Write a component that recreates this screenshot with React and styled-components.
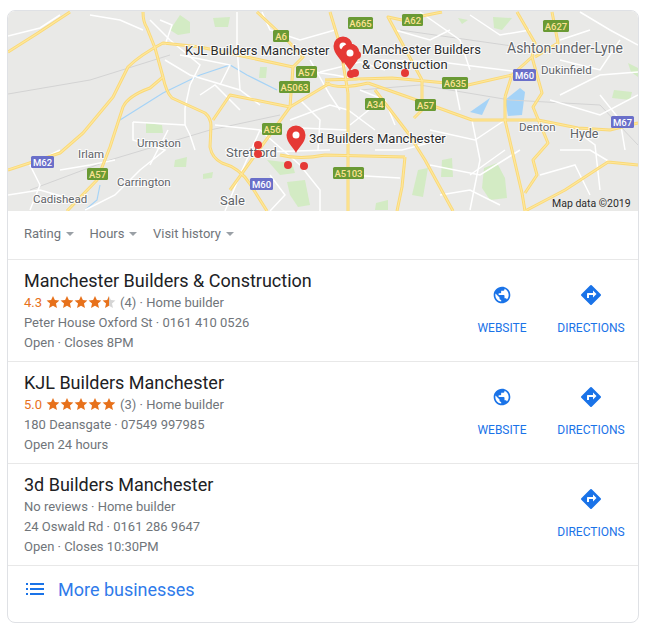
import React from 'react';
import styled, { createGlobalStyle } from 'styled-components';

const GlobalStyle = createGlobalStyle`
  body {
    margin: 0;
    background: #fff;
    font-family: "Roboto", "Liberation Sans", Arial, sans-serif;
  }
`;

const places = [
  {
    name: 'Manchester Builders & Construction',
    rating: '4.3',
    stars: 4.5,
    reviews: '(4)',
    address: 'Peter House Oxford St · 0161 410 0526',
    hours: 'Open · Closes 8PM',
    website: true,
  },
  {
    name: 'KJL Builders Manchester',
    rating: '5.0',
    stars: 5,
    reviews: '(3)',
    address: '180 Deansgate · 07549 997985',
    hours: 'Open 24 hours',
    website: true,
  },
  {
    name: '3d Builders Manchester',
    address: '24 Oswald Rd · 0161 286 9647',
    hours: 'Open · Closes 10:30PM',
    website: false,
  },
];

// main roads, in page coordinates
const yellowRoads = [
  'M8 52L38 33L70 12',
  'M143 12Q143 22 147 28L155 48L163 77Q166 92 172 98L205 113Q211 118 211 126L210 147Q212 158 222 163Q240 168 250 184L267 211',
  'M8 170L60 153L83 133L113 97L128 67Q140 55 163 43L200 47L293 67',
  'M67 211L97 180L110 147L123 107Q128 96 150 88L163 77',
  'M213 120L230 95L290 107L330 83',
  'M257 12L287 40L303 57L293 67L290 107',
  'M280 155Q300 160 325 155L405 157',
  'M325 80L392 78L468 85L512 75L532 57L535 43L517 12',
  'M368 83L425 103L472 120L538 120L578 128L610 130L638 123',
  'M505 97L505 120L522 193L525 211',
  'M512 75L505 97',
  'M532 57L542 93L533 107L548 143L533 160L537 175L525 193',
  'M552 12L558 43L535 57',
  'M525 211L565 190L608 162L638 165',
  'M348 93L348 211',
  'M375 90L408 133L425 160L453 211',
  'M405 157L402 187L397 211',
  'M442 12L402 20L388 17L402 43L422 80',
  'M422 80L422 110L414 118',
  'M330 12L340 45L348 93',
  'M325 83Q340 90 368 83',
  'M290 107L230 190',
];

const whiteRoads = [
  'M8 36L40 28L60 15',
  'M30 210L40 185L30 165L60 150',
  'M133 122L185 125L190 135L195 150',
  'M133 122L133 140L165 150L140 170L115 195L85 210',
  'M185 108L185 125',
  'M165 60L190 75L240 90L260 105',
  'M150 20L170 40L200 65L190 85L185 108',
  'M237 12L237 45L240 90',
  'M180 55L230 65L220 85',
  'M215 125L260 130L300 165',
  'M225 150L262 152L330 150',
  'M260 130L240 175L225 211',
  'M300 165L320 190L320 211',
  'M290 120L330 105L348 110L375 130',
  'M300 70L335 75L360 80',
  'M262 12L270 30L300 40L335 30',
  'M380 60L440 62L520 72',
  'M420 12L460 40L470 70',
  'M455 85L460 110',
  'M472 120L480 160L470 210',
  'M430 130L475 140L505 120',
  'M430 165L480 175L520 150',
  'M505 150L470 175',
  'M560 95L600 75L638 72',
  'M580 12L610 30L638 45',
  'M560 60L600 70L620 40',
  'M550 100L600 115L638 95',
  'M560 150L590 150L610 162',
  'M575 130L595 145L600 190',
  'M590 30L560 40',
  'M440 140L402 150L375 150',
  'M348 130L300 128',
  'M348 175L400 178',
  'M90 15L120 20L143 30',
  'M160 20L172 25L165 45',
  'M60 170L90 165L115 160',
  'M8 195L40 190L75 200',
  'M310 60L330 95L340 110',
  'M320 72L360 62L385 70',
  'M360 90L385 100L395 125',
  'M300 100L320 120L318 150',
  'M375 105L350 125',
  'M395 30L430 40L450 30',
  'M470 15L500 35L530 30',
  'M600 95L620 120L625 150',
  'M540 175L575 165L590 195',
  'M440 195L470 190L500 205',
  'M200 95L215 85L240 110',
  'M168 130L150 165',
  'M270 175L285 195L270 211',
];

const greyLines = [
  'M8 94L90 80L170 55',
  'M30 190L110 160L210 130L280 115',
  'M400 30L470 40L540 50',
  'M360 90L420 85L510 100L600 105L638 145',
];

const parks = [
  'M170 30L180 15L190 22L190 33L178 35Z',
  'M213 18L230 17L228 27L215 27Z',
  'M146 123L162 125L163 133L146 133Z',
  'M175 160L187 157L186 167L174 167Z',
  'M203 174L213 172L212 178L203 179Z',
  'M267 160L292 163L295 173L280 175Z',
  'M287 182L305 180L310 205L298 207L290 195Z',
  'M260 67L267 67L266 78L259 78Z',
  'M442 160L452 158L453 177L441 177Z',
  'M418 170L428 168L423 197L412 195Z',
  'M484 168L497 163L505 178L507 198L490 200L482 188Z',
  'M493 17L512 18L502 30L494 28Z',
  'M614 90L632 92L630 100L612 98Z',
  'M628 63L638 68L638 77L631 72Z',
  'M376 203L388 200L388 210L375 210Z',
  'M458 18L468 20L462 24Z',
];

const mapLabels = [
  { x: 185, y: 55, text: 'KJL Builders Manchester', size: 13 },
  { x: 362, y: 54, text: 'Manchester Builders', size: 13 },
  { x: 362, y: 69, text: '& Construction', size: 13 },
  { x: 309, y: 143, text: '3d Builders Manchester', size: 13 },
  { x: 507, y: 53, text: 'Ashton-under-Lyne', size: 14, soft: true },
  { x: 541, y: 74, text: 'Dukinfield', size: 11.5, soft: true },
  { x: 519, y: 131, text: 'Denton', size: 11.5, soft: true },
  { x: 570, y: 138, text: 'Hyde', size: 12.5, soft: true },
  { x: 137, y: 147, text: 'Urmston', size: 11.5, soft: true },
  { x: 78, y: 158, text: 'Irlam', size: 11.5, soft: true },
  { x: 117, y: 186, text: 'Carrington', size: 11.5, soft: true },
  { x: 33, y: 203, text: 'Cadishead', size: 11.5, soft: true },
  { x: 226, y: 157, text: 'Stretford', size: 13, soft: true },
  { x: 220, y: 205, text: 'Sale', size: 13, soft: true },
  { x: 552, y: 207, text: 'Map data ©2019', size: 10.5, dark: true },
];

const shields = [
  { x: 273, y: 30, w: 16, text: 'A6' },
  { x: 348, y: 17, w: 25, text: 'A665' },
  { x: 402, y: 14, w: 21, text: 'A62' },
  { x: 543, y: 20, w: 26, text: 'A627' },
  { x: 296, y: 66, w: 21, text: 'A57' },
  { x: 279, y: 81, w: 31, text: 'A5063' },
  { x: 442, y: 77, w: 26, text: 'A635' },
  { x: 365, y: 98, w: 20, text: 'A34' },
  { x: 415, y: 99, w: 21, text: 'A57' },
  { x: 262, y: 123, w: 20, text: 'A56' },
  { x: 333, y: 167, w: 31, text: 'A5103' },
  { x: 87, y: 168, w: 21, text: 'A57' },
  { x: 31, y: 156, w: 23, text: 'M62', blue: true },
  { x: 250, y: 178, w: 23, text: 'M60', blue: true },
  { x: 513, y: 69, w: 23, text: 'M60', blue: true },
  { x: 611, y: 116, w: 23, text: 'M67', blue: true },
];

const dots = [
  [258, 145], [258, 154], [288, 165], [304, 166], [405, 73], [351, 74], [355, 73], [357, 55],
];

function Pin({ x, y }) {
  return (
    <g transform={`translate(${x} ${y})`}>
      <path
        d="M0 13C-1 9 -9.5 3 -9.5 -5A9.5 9.5 0 0 1 9.5 -5C9.5 3 1 9 0 13Z"
        fill="#e53935"
      />
      <circle cy={-5} r={3.5} fill="#fff" />
    </g>
  );
}

function MapDrawing() {
  return (
    <MapSvg viewBox="8 11 630 200" role="img" aria-label="Map of Manchester">
      <rect x="8" y="11" width="630" height="200" fill="#e9e9e7" />
      {parks.map((d) => (
        <path key={d} d={d} fill="#d3ebc4" />
      ))}
      <path d="M505 100L520 88L525 92L522 115L508 116Z" fill="#a5d3f7" />
      <path d="M470 112L490 98L482 115Z" fill="#a5d3f7" />
      <path d="M120 120L163 93L200 75L230 65L247 75L277 90" fill="none" stroke="#a5d3f7" strokeWidth="1.2" />
      <path d="M100 185L97 200L85 210" fill="none" stroke="#a5d3f7" strokeWidth="1.2" />
      {greyLines.map((d) => (
        <path key={d} d={d} fill="none" stroke="#d3d3d3" strokeWidth="1" />
      ))}
      {whiteRoads.map((d) => (
        <path key={d} d={d} fill="none" stroke="#fff" strokeWidth="1.5" />
      ))}
      {yellowRoads.map((d) => (
        <path key={d} d={d} fill="none" stroke="#fad977" strokeWidth="3" strokeLinejoin="round" />
      ))}
      {yellowRoads.map((d) => (
        <path key={`in-${d}`} d={d} fill="none" stroke="#fee79c" strokeWidth="1.2" strokeLinejoin="round" />
      ))}
      {shields.map((s) => (
        <g key={`${s.text}-${s.x}`}>
          <rect x={s.x} y={s.y} width={s.w} height={12} rx={1.5} fill={s.blue ? '#6a6fc9' : '#6a9a34'} />
          <ShieldText x={s.x + s.w / 2} y={s.y + 9.5} $blue={s.blue}>
            {s.text}
          </ShieldText>
        </g>
      ))}
      {mapLabels.map((l) => (
        <MapLabel key={l.text} x={l.x} y={l.y} $size={l.size} $soft={l.soft} $dark={l.dark}>
          {l.text}
        </MapLabel>
      ))}
      {dots.map(([cx, cy]) => (
        <circle key={`${cx}-${cy}`} cx={cx} cy={cy} r={4} fill="#e53935" />
      ))}
      <Pin x={343} y={51} />
      <Pin x={350} y={58} />
      <Pin x={296} y={140} />
    </MapSvg>
  );
}

function Star({ id, fill }) {
  const pct = `${fill * 100}%`;
  return (
    <svg width="14" height="14" viewBox="0 0 24 24">
      <defs>
        <linearGradient id={id}>
          <stop offset={pct} stopColor="#e7711b" />
          <stop offset={pct} stopColor="#d5d5d5" />
        </linearGradient>
      </defs>
      <path d="M12 1.5l3.2 7.2 7.8.8-5.9 5.2 1.7 7.7L12 18.4l-6.8 4 1.7-7.7L1 9.5l7.8-.8z" fill={`url(#${id})`} />
    </svg>
  );
}

function Stars({ value, name }) {
  return (
    <StarRow>
      {[0, 1, 2, 3, 4].map((i) => (
        <Star key={i} id={`${name}-${i}`} fill={Math.max(0, Math.min(1, value - i))} />
      ))}
    </StarRow>
  );
}

function GlobeIcon() {
  return (
    <svg width="20" height="20" viewBox="0 0 24 24" fill="#1a73e8">
      <path d="M12 2C6.48 2 2 6.48 2 12s4.48 10 10 10 10-4.48 10-10S17.52 2 12 2zm-1 17.93C7.05 19.44 4 16.08 4 12c0-.62.08-1.21.21-1.79L9 15v1c0 1.1.9 2 2 2v1.93zm6.9-2.54c-.26-.81-1-1.39-1.9-1.39h-1v-3c0-.55-.45-1-1-1H8v-2h2c.55 0 1-.45 1-1V7h2c1.1 0 2-.9 2-2v-.41c2.93 1.19 5 4.06 5 7.41 0 2.08-.8 3.97-2.1 5.39z" />
    </svg>
  );
}

function DirectionsIcon() {
  return (
    <svg width="24" height="24" viewBox="0 0 24 24" fill="#1a73e8">
      <path d="M21.71 11.29l-9-9a.996.996 0 0 0-1.41 0l-9 9a.996.996 0 0 0 0 1.41l9 9c.39.39 1.02.39 1.41 0l9-9a.996.996 0 0 0 0-1.41zM14 14.5V12h-4v3H8v-4c0-.55.45-1 1-1h5V7.5l3.5 3.5-3.5 3.5z" />
    </svg>
  );
}

function ListIcon() {
  return (
    <svg width="18" height="18" viewBox="0 0 18 18" fill="#1a73e8">
      <rect x="0" y="3" width="2" height="2" />
      <rect x="0" y="8" width="2" height="2" />
      <rect x="0" y="13" width="2" height="2" />
      <rect x="4" y="3" width="14" height="2" />
      <rect x="4" y="8" width="14" height="2" />
      <rect x="4" y="13" width="14" height="2" />
    </svg>
  );
}

function Place({ place, index }) {
  return (
    <Row>
      <Details>
        <Name>{place.name}</Name>
        <Line>
          {place.rating ? (
            <>
              <Score>{place.rating}</Score>
              <Stars value={place.stars} name={`p${index}`} />
              <span>{place.reviews} · Home builder</span>
            </>
          ) : (
            <span>No reviews · Home builder</span>
          )}
        </Line>
        <Line>{place.address}</Line>
        <Line>{place.hours}</Line>
      </Details>
      <Actions>
        {place.website && (
          <Action $width={68}>
            <IconSlot>
              <GlobeIcon />
            </IconSlot>
            WEBSITE
          </Action>
        )}
        <Action $width={68}>
          <IconSlot>
            <DirectionsIcon />
          </IconSlot>
          DIRECTIONS
        </Action>
      </Actions>
    </Row>
  );
}

export default function App() {
  return (
    <Page>
      <GlobalStyle />
      <Card>
        <MapDrawing />
        <Filters>
          {['Rating', 'Hours', 'Visit history'].map((label) => (
            <Filter key={label}>
              {label}
              <Caret />
            </Filter>
          ))}
        </Filters>
        {places.map((place, i) => (
          <Place key={place.name} place={place} index={i} />
        ))}
        <More>
          <ListIcon />
          <MoreText>More businesses</MoreText>
        </More>
      </Card>
    </Page>
  );
}

const Page = styled.div`
  padding: 10px 12px 12px 7px;
  width: 651px;
  box-sizing: border-box;
`;

const Card = styled.div`
  border: 1px solid #dfe1e5;
  border-radius: 8px;
  overflow: hidden;
  background: #fff;
`;

const MapSvg = styled.svg`
  display: block;
  width: 630px;
  height: 200px;
`;

const MapLabel = styled.text`
  font-family: "Roboto", "Liberation Sans", sans-serif;
  font-size: ${(p) => p.$size}px;
  fill: ${(p) => (p.$soft ? '#5f6368' : '#2b2b2b')};
  stroke: ${(p) => (p.$dark ? 'none' : 'rgba(255, 255, 255, 0.85)')};
  stroke-width: 2px;
  paint-order: stroke;
`;

const ShieldText = styled.text`
  font-family: "Roboto", "Liberation Sans", sans-serif;
  font-size: 9.5px;
  font-weight: 500;
  text-anchor: middle;
  fill: ${(p) => (p.$blue ? '#fff' : '#fde293')};
`;

const Filters = styled.div`
  display: flex;
  align-items: center;
  gap: 15.5px;
  height: 49px;
  padding: 0 16px 4px;
  box-sizing: border-box;
  border-bottom: 1px solid #e8e8e8;
`;

const Filter = styled.div`
  display: flex;
  align-items: center;
  gap: 5px;
  font-size: 13px;
  color: #70757a;
`;

const Caret = styled.span`
  width: 0;
  height: 0;
  margin-top: 1px;
  border-left: 4px solid transparent;
  border-right: 4px solid transparent;
  border-top: 4px solid #9aa0a6;
`;

const Row = styled.div`
  display: flex;
  justify-content: space-between;
  height: 102px;
  padding: 9px 13px 0 16px;
  box-sizing: border-box;
  border-bottom: 1px solid #e8e8e8;
`;

const Details = styled.div`
  display: flex;
  flex-direction: column;
`;

const Name = styled.div`
  font-size: 18px;
  line-height: 23px;
  color: #202124;
`;

const Line = styled.div`
  display: flex;
  align-items: center;
  gap: 4px;
  height: 20px;
  font-size: 13px;
  color: #70757a;
`;

const Score = styled.span`
  color: #e7711b;
`;

const StarRow = styled.span`
  display: inline-flex;
`;

const Actions = styled.div`
  display: flex;
  gap: 21px;
  padding-top: 14px;
`;

const Action = styled.div`
  display: flex;
  flex-direction: column;
  align-items: center;
  width: ${(p) => p.$width}px;
  font-size: 12px;
  white-space: nowrap;
  color: #1a73e8;
`;

const IconSlot = styled.div`
  display: flex;
  align-items: center;
  justify-content: center;
  height: 24px;
  margin-bottom: 14px;
`;

const More = styled.div`
  display: flex;
  align-items: center;
  gap: 14px;
  height: 56px;
  padding: 0 17px 10px 18px;
  box-sizing: border-box;
`;

const MoreText = styled.span`
  font-size: 18px;
  color: #2f7bea;
`;
